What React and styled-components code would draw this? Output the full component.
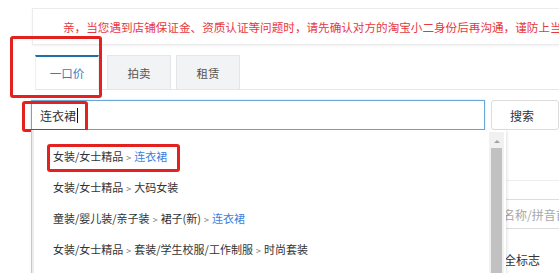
import styled, { createGlobalStyle } from 'styled-components'

const GlobalStyle = createGlobalStyle`
  html, body {
    margin: 0;
    padding: 0;
    background: #fff;
    overflow: hidden;
  }
  body {
    font-family: "Noto Sans CJK SC", "Noto Sans", sans-serif;
    font-size: 12px;
    color: #333;
  }
`

const Page = styled.div`
  width: 559px;
  height: 273px;
  padding: 8px 0 0 31px;
  box-sizing: border-box;
  overflow: hidden;
`

const Notice = styled.div`
  margin-left: 1px;
  width: 600px;
  height: 37px;
  box-sizing: border-box;
  border: 1px solid #ececec;
  box-shadow: 0 1px 2px rgba(0, 0, 0, 0.06);
  padding-left: 30px;
  display: flex;
  align-items: center;
  white-space: nowrap;
  color: #e8383d;
  font-size: 11.6px;
`

const Tabs = styled.div`
  margin-top: 10px;
  margin-left: 4px;
  height: 34px;
  display: flex;
  gap: 8px;
  border-bottom: 1px solid #e6e6e6;
`

const Tab = styled.div`
  position: relative;
  width: 64px;
  height: 34px;
  box-sizing: border-box;
  display: flex;
  align-items: center;
  justify-content: center;
  background: ${p => (p.$active ? '#fff' : '#f2f3f5')};
  border: 1px solid ${p => (p.$active ? '#eef0f2' : '#e4e6e9')};
  border-top: ${p => (p.$active ? '2px solid #1f6fa8' : '1px solid #e4e6e9')};
  border-bottom: none;
  color: ${p => (p.$active ? '#2f7fc0' : '#555')};
  font-size: 11.5px;
  &:nth-child(3) {
    margin-left: -3px;
  }
`

const Mark = styled.div`
  position: absolute;
  left: ${p => p.$left}px;
  top: ${p => p.$top}px;
  width: ${p => p.$w}px;
  height: ${p => p.$h}px;
  box-sizing: border-box;
  border: 3px solid #e3221f;
  border-radius: 3px;
  pointer-events: none;
`

const SearchRow = styled.div`
  position: relative;
  margin-top: 10px;
  display: flex;
  gap: 6px;
`

const SearchBox = styled.div`
  position: relative;
  width: 475px;
  height: 30px;
  box-sizing: border-box;
  border: 1px solid #6aa6d8;
  box-shadow: 0 0 2px rgba(80, 150, 220, 0.35);
  display: flex;
  align-items: center;
  padding-left: 8px;
  font-size: 12px;
  color: #333;
`

const Caret = styled.span`
  display: inline-block;
  width: 1px;
  height: 15px;
  background: #111;
  margin-left: 1px;
`

const SearchButton = styled.button`
  width: 70px;
  height: 30px;
  box-sizing: border-box;
  border: 1px solid #dcdcdc;
  border-radius: 3px;
  background: #fff;
  font-family: inherit;
  font-size: 12px;
  color: #333;
  text-align: left;
  padding-left: 18px;
`

const Dropdown = styled.div`
  position: absolute;
  left: 0;
  top: 30px;
  width: 475px;
  height: 170px;
  box-sizing: border-box;
  background: #fff;
  border-left: 1px solid #c8c8c8;
  box-shadow: inset 2px 0 0 #ececec, 1px 1px 3px rgba(0, 0, 0, 0.12);
  padding-top: 10px;
  display: flex;
  z-index: 2;
`

const List = styled.div`
  flex: 1;
`

const Item = styled.div`
  position: relative;
  height: 31px;
  display: flex;
  align-items: center;
  padding-left: 21px;
  white-space: nowrap;
  font-size: 11px;
  color: #333;
`

const Sep = styled.span`
  color: #777;
  font-size: 9px;
  margin: 0 3px;
`

const Hit = styled.span`
  color: #3f7fe0;
`

const Scrollbar = styled.div`
  width: 15px;
  margin-right: 2px;
  margin-top: -8px;
  background: #f1f1f1;
  display: flex;
  flex-direction: column;
  align-items: center;
`

const ScrollArrow = styled.div`
  margin-top: 8px;
  width: 0;
  height: 0;
  border-left: 3px solid transparent;
  border-right: 3px solid transparent;
  border-bottom: 3px solid #a3a3a3;
`

const ScrollThumb = styled.div`
  margin-top: 5px;
  width: 11px;
  flex: 1;
  background: #c1c1c1;
`

const Section = styled.div`
  margin-top: 50px;
  border-top: 1px solid #eeeeee;
  width: 600px;
`

const FormRow = styled.div`
  display: flex;
  align-items: center;
  padding-left: ${p => p.$indent}px;
  margin-top: ${p => p.$gap}px;
`

const BrandInput = styled.div`
  width: 200px;
  height: 30px;
  box-sizing: border-box;
  border: 1px solid #dddddd;
  display: flex;
  align-items: center;
  padding-left: 8px;
  color: #a8a8a8;
  font-size: 12px;
  white-space: nowrap;
`

const Label = styled.span`
  font-size: 12px;
  color: #333;
`

const paths = [
  [['女装/女士精品'], ['连衣裙', true]],
  [['女装/女士精品'], ['大码女装']],
  [['童装/婴儿装/亲子装'], ['裙子(新)'], ['连衣裙', true]],
  [['女装/女士精品'], ['套装/学生校服/工作制服'], ['时尚套装']],
  [['运动服/休闲服装'], ['运动套装/休闲连衣裙'], ['连衣裙', true]],
]

export default function App() {
  return (
    <>
      <GlobalStyle />
      <Page>
        <Notice>
          亲，当您遇到店铺保证金、资质认证等问题时，请先确认对方的淘宝小二身份后再沟通，谨防上当受骗！
        </Notice>
        <Tabs>
          <Tab $active>
            一口价
            <Mark $left={-26} $top={-21} $w={92} $h={62} />
          </Tab>
          <Tab>拍卖</Tab>
          <Tab>租赁</Tab>
        </Tabs>
        <SearchRow>
          <SearchBox>
            连衣裙<Caret />
            <Mark $left={-10} $top={0} $w={66} $h={31} />
          </SearchBox>
          <SearchButton>搜索</SearchButton>
          <Dropdown>
            <List>
              {paths.map((parts, i) => (
                <Item key={i}>
                  {parts.map(([text, hit], j) => (
                    <span key={j}>
                      {j > 0 && <Sep>&gt;</Sep>}
                      {hit ? <Hit>{text}</Hit> : text}
                    </span>
                  ))}
                  {i === 0 && <Mark $left={15} $top={4} $w={133} $h={28} />}
                </Item>
              ))}
            </List>
            <Scrollbar>
              <ScrollArrow />
              <ScrollThumb />
            </Scrollbar>
          </Dropdown>
        </SearchRow>
        <Section>
          <FormRow $indent={403} $gap={18}>
            <BrandInput>请输入品牌名称/拼音首字母</BrandInput>
          </FormRow>
          <FormRow $indent={461} $gap={22}>
            <Label>安全标志</Label>
          </FormRow>
        </Section>
      </Page>
    </>
  )
}
